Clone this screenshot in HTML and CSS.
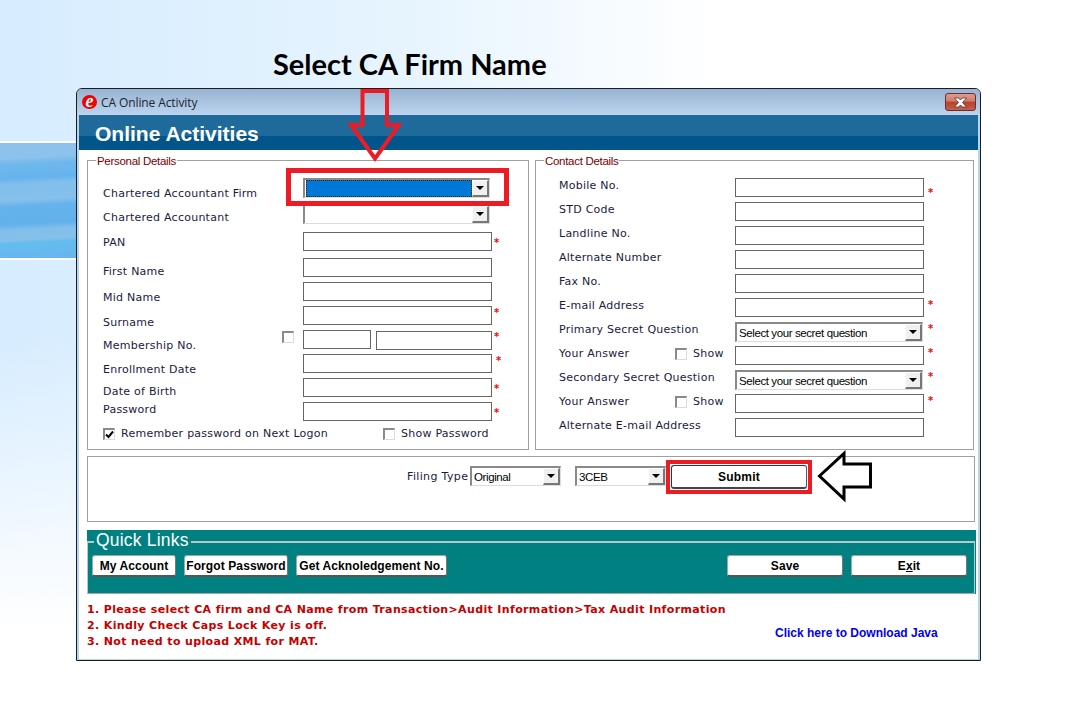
FILE: index.html
```html
<!DOCTYPE html>
<html lang="en">
<head>
<meta charset="utf-8">
<title>CA Online Activity</title>
<link rel="stylesheet" href="styles.css">
</head>
<body>
<div class="band"></div>
<h1 class="caption">Select CA Firm Name</h1>
<main class="window">
  <div class="titlebar">
    <span class="app-icon">e</span>
    <span class="title-text">CA Online Activity</span>
    <span class="close"><svg width="17" height="11" viewBox="0 0 17 11"><path d="M2.500 1h4l2 2 2-2h4l-4 4.500 4 4.500h-4l-2-2-2 2h-4l4-4.500z" fill="#fff" stroke="#5a3030" stroke-width=".8"/></svg></span>
  </div>
  <header class="banner">Online Activities</header>
  <div class="content">
    <div class="details">
      <section class="group personal">
        <span class="legend">Personal Details</span>
        <div class="columns">
          <div class="labels personal-labels">
            <span>Chartered Accountant Firm</span>
            <span>Chartered Accountant</span>
            <span>PAN</span>
            <span>First Name</span>
            <span>Mid Name</span>
            <span>Surname</span>
            <span>Membership No.</span>
            <span>Enrollment Date</span>
            <span>Date of Birth</span>
            <span>Password</span>
          </div>
          <div class="fields personal-fields">
            <div class="field firm-field">
              <div class="combo"><span class="combo-value selected"></span><span class="combo-btn"><i></i></span></div>
              <div class="highlight-firm"></div>
            </div>
            <div class="field"><div class="combo"><span class="combo-value"></span><span class="combo-btn"><i></i></span></div></div>
            <div class="field"><input class="text"><span class="star mid">*</span></div>
            <div class="field"><input class="text"></div>
            <div class="field"><input class="text"></div>
            <div class="field"><input class="text"><span class="star">*</span></div>
            <div class="field membership">
              <span class="check"></span>
              <input class="text member-a">
              <input class="text member-b">
              <span class="star">*</span>
            </div>
            <div class="field"><input class="text"><span class="star far">*</span></div>
            <div class="field"><input class="text"><span class="star mid">*</span></div>
            <div class="field"><input class="text"><span class="star mid">*</span></div>
          </div>
        </div>
        <div class="options">
          <label class="option remember"><span class="check"><svg width="9" height="9" viewBox="0 0 9 9"><path d="M1 4.500l2.500 2.500L8 1.500" fill="none" stroke="#000" stroke-width="2"/></svg></span>Remember password on Next Logon</label>
          <label class="option"><span class="check"></span>Show Password</label>
        </div>
      </section>
      <section class="group contact">
        <span class="legend">Contact Details</span>
        <div class="contact-grid">
          <span class="row-label">Mobile No.</span>
          <div class="field"><input class="text"><span class="star low">*</span></div>
          <span class="row-label">STD Code</span>
          <div class="field"><input class="text"></div>
          <span class="row-label">Landline No.</span>
          <div class="field"><input class="text"></div>
          <span class="row-label">Alternate Number</span>
          <div class="field"><input class="text"></div>
          <span class="row-label">Fax No.</span>
          <div class="field"><input class="text"></div>
          <span class="row-label">E-mail Address</span>
          <div class="field"><input class="text"><span class="star">*</span></div>
          <span class="row-label">Primary Secret Question</span>
          <div class="field"><div class="combo"><span class="combo-value">Select your secret question</span><span class="combo-btn"><i></i></span></div><span class="star">*</span></div>
          <span class="row-label answer">Your Answer<label class="option show"><span class="check"></span>Show</label></span>
          <div class="field"><input class="text"><span class="star">*</span></div>
          <span class="row-label">Secondary Secret Question</span>
          <div class="field"><div class="combo"><span class="combo-value">Select your secret question</span><span class="combo-btn"><i></i></span></div><span class="star">*</span></div>
          <span class="row-label answer">Your Answer<label class="option show"><span class="check"></span>Show</label></span>
          <div class="field"><input class="text"><span class="star">*</span></div>
          <span class="row-label">Alternate E-mail Address</span>
          <div class="field"><input class="text"></div>
        </div>
      </section>
    </div>
    <section class="group filing">
      <span class="filing-label">Filing Type</span>
      <div class="combo small"><span class="combo-value">Original</span><span class="combo-btn"><i></i></span></div>
      <div class="combo small second"><span class="combo-value">3CEB</span><span class="combo-btn"><i></i></span></div>
      <div class="submit-box"><button class="submit">Submit</button></div>
    </section>
    <section class="links-panel">
      <div class="links">
        <span class="links-legend">Quick Links</span>
        <button class="btn account">My Account</button>
        <button class="btn forgot">Forgot Password</button>
        <button class="btn ack">Get Acknoledgement No.</button>
        <button class="btn wide save">Save</button>
        <button class="btn wide">E<u>x</u>it</button>
      </div>
    </section>
    <div class="footer">
      <ol class="notes">
        <li>1. Please select CA firm and CA Name from Transaction&gt;Audit Information&gt;Tax Audit Information</li>
        <li>2. Kindly Check Caps Lock Key is off.</li>
        <li>3. Not need to upload XML for MAT.</li>
      </ol>
      <a class="java" href="#">Click here to Download Java</a>
    </div>
  </div>
</main>
<svg class="arrows" width="1066" height="717" viewBox="0 0 1066 717">
  <path d="M362.500 91H387V125H399L375 158.500 351 125H362.500z" fill="none" stroke="#ed1c24" stroke-width="4"/>
  <path d="M819.500 476L844 453.500V464H870.500V487H844V499z" fill="none" stroke="#000" stroke-width="3"/>
</svg>
</body>
</html>
```

FILE: styles.css
```css
* { box-sizing: border-box; }
html, body { margin: 0; height: 717px; overflow: hidden; }
body {
  position: relative;
  background:
    linear-gradient(to bottom, rgba(255,255,255,0) 340px, #fff 630px),
    linear-gradient(to right, #d6ecff 0, #e6f4fe 400px, #fff 720px);
  font-family: "DejaVu Sans", Verdana, sans-serif;
  font-size: 11px;
  color: #1a1a40;
}
.band {
  position: absolute;
  left: 0; top: 141px;
  width: 76px; height: 119px;
  border-top: 2px solid #fff;
  border-bottom: 2px solid #fff;
  background: linear-gradient(177deg,
    #8dc2ec 0, #8cc2ec 16px, #6fb8ed 22px, #66b3ec 36px,
    #82bfec 42px, #86c0ec 58px, #66b3ec 64px, #62b1ea 82px,
    #82bfea 88px, #84c0ea 98px, #62bdee 101px, #68b6ee 115px);
}
.caption {
  margin: 0;
  height: 88px;
  padding: 46px 0 0 273px;
  font: 700 29px/36px Lato, "Open Sans", sans-serif;
  color: #000;
}
.window {
  margin-left: 76px;
  width: 905px;
  height: 573px;
  padding: 0 2px 2px;
  border: 1px solid #1c1c1c;
  border-radius: 6px 6px 0 0;
  background: #b5d6f0;
}
.titlebar {
  display: flex;
  align-items: center;
  height: 26px;
  margin: 0 -2px;
  padding: 0 4px 0 5px;
  border-radius: 5px 5px 0 0;
  background: linear-gradient(#98b3d3, #bcd4ee);
}
.app-icon {
  width: 15px; height: 14px;
  border-radius: 50%;
  background: #f00000;
  color: #fff;
  font: italic 700 18px/12px "Liberation Serif", serif;
  text-align: center;
}
.title-text {
  margin: 2px 0 0 4px;
  font: 12px/16px "Open Sans", sans-serif;
  color: #1c2430;
  letter-spacing: -.1px;
}
.close {
  display: flex;
  align-items: center;
  justify-content: center;
  margin-left: auto;
  width: 31px; height: 18px;
  border: 1px solid #6d2c30;
  border-radius: 3px;
  background: linear-gradient(#dd9c90 0, #cf7a68 45%, #b8412c 50%, #c0604c 100%);
}
.banner {
  height: 35px;
  padding-left: 16px;
  font: 700 21px/38px "Liberation Sans", Arial, sans-serif;
  color: #fff;
  background: linear-gradient(#1f6a9a 0, #1e6b9b 21px, #02558b 21px, #02558b 100%);
}
.content {
  height: 509px;
  padding: 10px 0 0 8px;
  background: #fff;
}
.details { display: flex; gap: 6px; }
.group {
  position: relative;
  border: 1px solid #a0a0a0;
}
.legend {
  position: absolute;
  top: -7px; left: 8px;
  padding: 0 1px;
  background: #fff;
  font: 11.500px/14px "Liberation Sans", Arial, sans-serif;
  letter-spacing: -.3px;
  color: #7a0000;
}
.personal { width: 442px; height: 290px; }
.columns { display: flex; align-items: flex-start; padding-left: 15px; }
.labels, .row-label, .option, .filing-label { letter-spacing: .25px; }
.labels { display: grid; line-height: 14px; }
.personal-labels {
  width: 200px;
  padding-top: 26px;
  grid-template-rows: 24px 25px 29px 26px 25px 23px 24px 22px 18px 14px;
}
.fields { display: grid; width: 189px; }
.personal-fields {
  padding-top: 17px;
  grid-template-rows: 26px 28px 26px 24px 24px 24px 24px 24px 24px 19px;
}
.field { position: relative; height: 19px; }
.text {
  display: block;
  width: 100%;
  height: 19px;
  margin: 0;
  padding: 0;
  border: 1px solid #666;
  border-radius: 0;
  background: #fff;
  outline: 0;
}
.star {
  position: absolute;
  left: calc(100% + 2px);
  top: 1px;
  width: 6px;
  font: 700 10px/11px "DejaVu Sans", sans-serif;
  color: #f00;
}
.star.mid { top: 5px; }
.star.low { top: 9px; }
.star.far { left: calc(100% + 4px); }
.contact .star { left: calc(100% + 4px); }
.firm-field { z-index: 1; }
.combo {
  display: flex;
  width: 187px;
  height: 20px;
  border-top: 2px solid #8a8a8a;
  border-left: 2px solid #8a8a8a;
  border-right: 1px solid #dcdcdc;
  border-bottom: 1px solid #dcdcdc;
  background: #fff;
}
.combo-value {
  flex: 1;
  padding-left: 2px;
  font: 11.500px/19px "Liberation Sans", Arial, sans-serif;
  letter-spacing: -.4px;
  color: #000;
  white-space: nowrap;
  overflow: hidden;
}
.combo-value.selected {
  margin: 0 0 0 1px;
  background: #0078d7;
  outline: 1px dotted #402000;
  outline-offset: -1px;
}
.combo-btn {
  display: flex;
  align-items: center;
  justify-content: center;
  width: 17px;
  border-top: 1px solid #fff;
  border-left: 1px solid #fff;
  border-right: 2px solid #777;
  border-bottom: 2px solid #777;
  background: #f0f0f0;
}
.combo-btn i {
  border-top: 4px solid #000;
  border-left: 4px solid transparent;
  border-right: 4px solid transparent;
}
.highlight-firm {
  position: absolute;
  left: -17px;
  top: -10px;
  width: 223px;
  height: 38px;
  border: 5px solid #ed1c24;
}
.check {
  flex: none;
  display: flex;
  align-items: center;
  justify-content: center;
  width: 12px; height: 12px;
  border-top: 2px solid #8a8a8a;
  border-left: 2px solid #8a8a8a;
  border-right: 1px solid #dcdcdc;
  border-bottom: 1px solid #dcdcdc;
  background: #fff;
}
.membership { display: flex; }
.membership .check { position: absolute; left: -21px; top: 1px; }
.member-a { width: 68px; height: 19px; }
.member-b { width: 116px; margin: 1px 0 0 5px; }
.options {
  display: flex;
  margin-top: 6px;
  padding-left: 15px;
  line-height: 14px;
}
.option { display: flex; align-items: center; gap: 6px; }
.remember { width: 280px; }
.contact { width: 439px; height: 290px; }
.contact-grid {
  display: grid;
  grid-template-columns: 176px 189px;
  grid-auto-rows: 24px;
  padding: 17px 0 0 23px;
  line-height: 14px;
}
.row-label { display: flex; padding-top: 1px; }
.answer { position: relative; }
.show { position: absolute; left: 116px; top: 1px; }
.contact .combo { width: 188px; }
.filing {
  display: flex;
  align-items: flex-start;
  width: 888px;
  height: 66px;
  margin-top: 6px;
  padding: 3px 0 0 319px;
}
.filing-label { margin-top: 10px; line-height: 14px; width: 63px; letter-spacing: .35px; }
.combo.small { width: 91px; margin-top: 6px; }
.combo.second { margin-left: 14px; }
.combo.small .combo-btn { width: 17px; }
.submit-box {
  display: flex;
  padding: 1px;
  border: 4px solid #ed1c24;
}
.submit {
  width: 136px; height: 24px;
  padding: 1px 0 0;
  border: 1px solid #333;
  border-right-color: #555;
  border-bottom: 2px solid #444;
  border-radius: 3px;
  background: #fff;
  font: 700 12px/18px "Liberation Sans", Arial, sans-serif;
  letter-spacing: .2px;
  color: #000;
}
.links-panel {
  width: 889px;
  height: 64px;
  margin-top: 8px;
  padding-top: 11px;
  background: #008080;
}
.links {
  position: relative;
  display: flex;
  gap: 8px;
  width: 888px;
  height: 53px;
  padding: 12px 7px 0 4px;
  border: 1px solid #b8c8c8;
  border-top-width: 2px;
  border-bottom-color: #a0a8a8;
}
.links-legend {
  position: absolute;
  left: 6px; top: -13px;
  padding: 0 2px;
  background: #008080;
  font: 17.500px/20px "Liberation Sans", Arial, sans-serif;
  letter-spacing: .2px;
  color: #fff;
}
.btn {
  height: 22px;
  padding: 0;
  border: 1px solid #9aa;
  border-right-color: #777;
  border-bottom: 2px solid #555;
  border-radius: 3px;
  background: #fff;
  font: 700 12px/18px "Liberation Sans", Arial, sans-serif;
  letter-spacing: .1px;
  color: #000;
}
.account { width: 84px; }
.forgot { width: 104px; }
.ack { width: 151px; }
.wide { width: 116px; }
.save { margin-left: auto; }
.footer { display: flex; margin-top: 8px; }
.notes {
  width: 688px;
  margin: 0;
  padding: 0;
  list-style: none;
  font: 700 11px/16px "DejaVu Sans", Verdana, sans-serif;
  letter-spacing: .36px;
  color: #c40000;
  white-space: nowrap;
}
.java {
  margin-top: 23px;
  font: 700 12px/16px "Liberation Sans", Arial, sans-serif;
  color: #0000f0;
  text-decoration: none;
}
.arrows { position: absolute; left: 0; top: 0; pointer-events: none; }
```
